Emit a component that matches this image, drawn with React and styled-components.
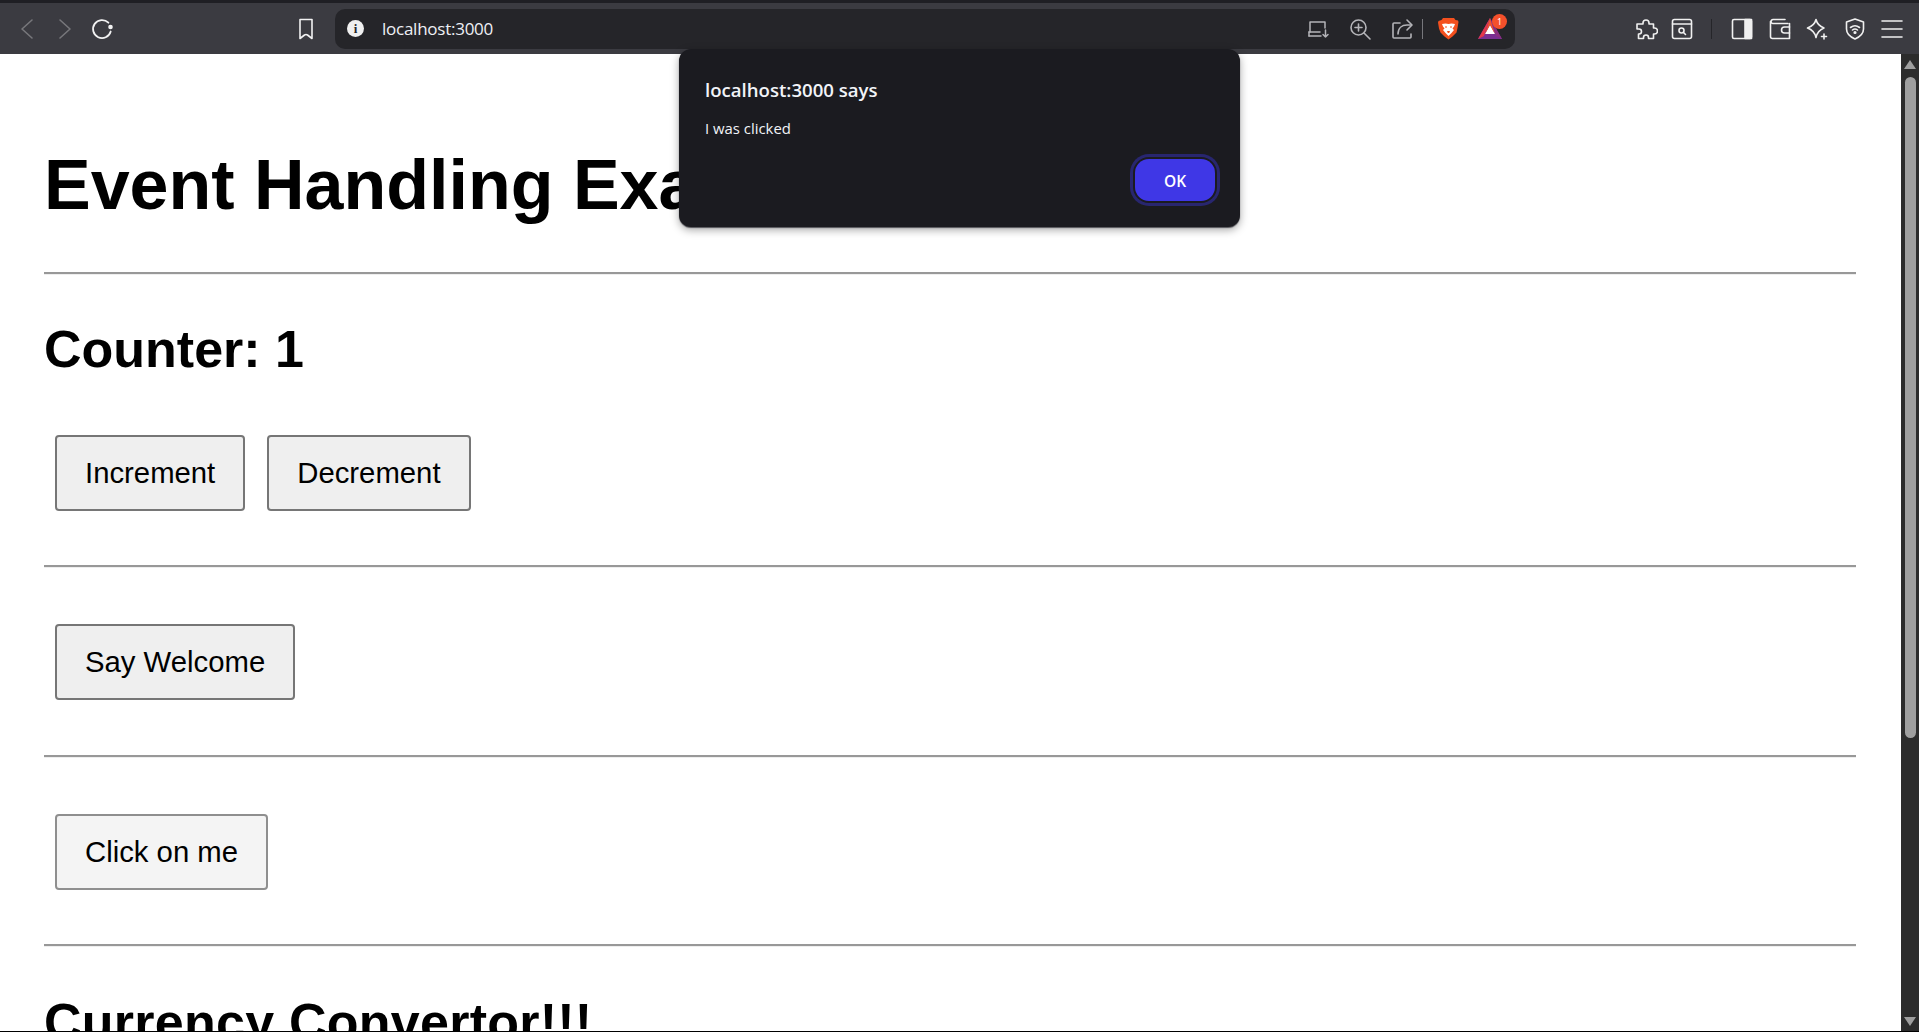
import React from "react";
import styled, { createGlobalStyle } from "styled-components";

const Global = createGlobalStyle`
	html, body {
		margin: 0;
		padding: 0;
		height: 100%;
		overflow: hidden;
		background: #ffffff;
	}
`;

const Window = styled.div`
	height: 1032px;
	display: flex;
	flex-direction: column;
	overflow: hidden;
	position: relative;
	font-family: "Liberation Sans", Arial, sans-serif;
`;

const TopStrip = styled.div`
	height: 3px;
	background: #1f1f24;
	flex: none;
`;

const Toolbar = styled.div`
	height: 51px;
	flex: none;
	background: #3b3b41;
	display: flex;
	align-items: center;
	color: #fff;
	padding-left: 15px;
`;

const NavButton = styled.div`
	width: 24px;
	height: 24px;
	margin-right: ${(p) => p.$gap || 0}px;
	color: ${(p) => p.$color || "#f2f2f2"};
	display: flex;
	flex: none;
	align-items: center;
	justify-content: center;
`;

const AddressBar = styled.div`
	width: 1180px;
	height: 40px;
	margin-left: 17px;
	border-radius: 10px;
	background: #252529;
	display: flex;
	align-items: center;
	padding: 0 13px 0 12px;
	box-sizing: border-box;
	flex: none;
`;

const InfoDot = styled.div`
	width: 17px;
	height: 17px;
	border-radius: 50%;
	background: #f0f0f0;
	color: #252529;
	font-family: "Liberation Serif", serif;
	font-size: 13px;
	font-weight: 700;
	line-height: 17px;
	text-align: center;
`;

const Url = styled.div`
	margin-left: 18px;
	flex: 1;
	font-family: "Open Sans", sans-serif;
	font-size: 17px;
	letter-spacing: -0.25px;
	color: #eef0f5;
`;

const AddressIcons = styled.div`
	display: flex;
	align-items: center;
	color: #b4b4b8;
`;

const Separator = styled.div`
	width: 1px;
	height: 20px;
	background: ${(p) => p.$color || "#77777c"};
	margin: ${(p) => p.$margin};
`;

const Tools = styled.div`
	display: flex;
	align-items: center;
	margin-left: 119px;
	color: #f0f0f0;
`;

const Slot = styled.div`
	position: relative;
	width: 24px;
	height: 24px;
	display: flex;
	align-items: center;
	justify-content: center;
	margin-left: ${(p) => p.$left || 0}px;
`;

const Badge = styled.div`
	position: absolute;
	top: -3px;
	right: -5px;
	width: 15px;
	height: 15px;
	border-radius: 50%;
	background: #f4502b;
	color: #fff;
	font-family: "Noto Sans", sans-serif;
	font-size: 9px;
	line-height: 15px;
	text-align: center;
`;

const Body = styled.div`
	flex: 1;
	min-height: 0;
	display: flex;
`;

const Page = styled.div`
	flex: 1;
	min-width: 0;
	overflow: hidden;
	padding: 12px 45px 0 44px;
	color: #000;
`;

const Title = styled.h1`
	font-size: 70px;
	font-weight: 700;
	line-height: 81px;
	margin: 79px 0 46px;
	white-space: nowrap;
`;

const Rule = styled.hr`
	height: 0;
	border: none;
	border-top: 2px solid #989898;
	border-bottom: 1px solid #eeeeee;
	margin: 0;
`;

const Counter = styled.h2`
	font-size: 52px;
	font-weight: 700;
	line-height: 60px;
	letter-spacing: ${(p) => p.$spacing || 0}px;
	margin: ${(p) => p.$top || 44}px 0 56px;
`;

const ButtonRow = styled.div`
	display: flex;
	gap: 22px;
	padding: ${(p) => p.$pad || "0"};
	margin-left: 11px;
`;

const PageButton = styled.button`
	height: 76px;
	padding: 0 28px;
	font-family: "Liberation Sans", Arial, sans-serif;
	font-size: 29.3px;
	color: #000;
	background: ${(p) => p.$bg || "#efefef"};
	border: 2px solid ${(p) => p.$border || "#767676"};
	border-radius: 4px;
	box-sizing: border-box;
`;

const Scrollbar = styled.div`
	width: 18px;
	flex: none;
	background: #2c2c2c;
	position: relative;
`;

const Thumb = styled.div`
	position: absolute;
	left: 4px;
	top: 23px;
	width: 11px;
	height: 661px;
	border-radius: 5.5px;
	background: #9f9f9f;
`;

const Arrow = styled.div`
	position: absolute;
	left: 3px;
	${(p) => (p.$down ? "bottom: 6px;" : "top: 6px;")}
	width: 0;
	height: 0;
	border-left: 6px solid transparent;
	border-right: 6px solid transparent;
	${(p) => (p.$down ? "border-top" : "border-bottom")}: 9px solid #9f9f9f;
`;

const BottomLine = styled.div`
	position: absolute;
	left: 0;
	right: 0;
	bottom: 0;
	height: 1px;
	background: #000;
`;

const Dialog = styled.div`
	position: absolute;
	left: 679px;
	top: 49px;
	width: 561px;
	height: 178px;
	box-sizing: border-box;
	padding: 28px 25px 0 26px;
	border-radius: 12px;
	background: #1b1b20;
	box-shadow: 0 1px 1px #55555a, 0 3px 8px rgba(0, 0, 0, 0.35);
	color: #f2f4f8;
	font-family: "Open Sans", "Noto Sans", sans-serif;
	display: flex;
	flex-direction: column;
`;

const DialogTitle = styled.div`
	font-size: 18.6px;
	font-weight: 600;
	line-height: 26px;
`;

const DialogText = styled.div`
	font-size: 14.9px;
	line-height: 20px;
	margin-top: 15px;
`;

const DialogActions = styled.div`
	display: flex;
	justify-content: flex-end;
	margin-top: 21px;
`;

const OkButton = styled.div`
	width: 80px;
	height: 42px;
	box-sizing: border-box;
	padding-top: 2px;
	border-radius: 14px;
	background: #3f37e6;
	box-shadow: 0 0 0 2px #1b1b20, 0 0 0 5px #28266f;
	display: flex;
	align-items: center;
	justify-content: center;
	font-size: 15.5px;
	font-weight: 600;
	color: #fff;
`;

const Icon = ({ children, size = 24, width = 1.6 }) => (
	<svg width={size} height={size} viewBox="0 0 24 24" fill="none" stroke="currentColor" strokeWidth={width} strokeLinecap="round" strokeLinejoin="round">
		{children}
	</svg>
);

export default function App() {
	return (
		<Window>
			<Global />
			<TopStrip />
			<Toolbar>
				<NavButton $gap={14} $color="#77777b">
					<Icon><path d="M17 3 7 12l10 9" /></Icon>
				</NavButton>
				<NavButton $gap={14} $color="#77777b">
					<Icon><path d="m7 3 10 9-10 9" /></Icon>
				</NavButton>
				<NavButton $gap={179}>
					<Icon width={1.8}>
						<path d="M17.400 5.700A9 9 0 1 0 19.700 14.500" />
						<circle cx="19.500" cy="10" r="1.400" fill="currentColor" />
					</Icon>
				</NavButton>
				<NavButton>
					<Icon><path d="M6 2.500h12v19l-4.500-3.500q-1.500-1-3 0L6 21.500z" /></Icon>
				</NavButton>
				<AddressBar>
					<InfoDot>i</InfoDot>
					<Url>localhost:3000</Url>
					<AddressIcons>
						<Slot>
							<Icon width={1.5}>
								<path d="M4 15V5h15v6" />
								<path d="M3 19h12M3 15h11" />
								<path d="M3 15v4" />
								<path d="M19.500 13v7m-2.500-2.500 2.500 2.500 2.500-2.500" />
							</Icon>
						</Slot>
						<Slot $left={18}>
							<Icon>
								<circle cx="10.500" cy="10.500" r="7.500" />
								<path d="m16 16 6 6M10.500 7v7M7 10.500h7" />
							</Icon>
						</Slot>
						<Slot $left={18}>
							<Icon>
								<path d="M10 6H4a1 1 0 0 0-1 1v13a1 1 0 0 0 1 1h16a1 1 0 0 0 1-1v-3" />
								<path d="M8 17c0-6 4-9 9-9h4" />
								<path d="m17 3 5 5-5 5" />
							</Icon>
						</Slot>
						<Separator $margin="0 8px 0 8px" />
						<Slot $left={5}>
							<svg width="21" height="22" viewBox="0 0 21 22">
								<path d="M5 0h11l1.500 2 2.500.500.500 1.500-.500 3-.500 3-1 4.500-4 4-4 3-4-3-4-4L1 10.500l-.500-3-.500-3 .500-1.500L3.500 2z" fill="#f4501e" />
								<path d="M4 6l3.500-.500 3 .500 3-.500L17 6l-1 2.500-1.500 2L16 12l-2.500 3-3 3-3-3L5 12l1.500-1.500L5 8.500z" fill="#fff" />
								<path d="M7 9h2M12 9h2M9.500 13.500h2l-1 1.500z" fill="#f4501e" stroke="#f4501e" strokeWidth="1" />
							</svg>
						</Slot>
						<Slot $left={18}>
							<svg width="24" height="22" viewBox="0 0 24 22">
								<path d="M12 0 0 21h24z" fill="#7a2f92" />
								<path d="M12 0 0 21l6-3z" fill="#e5364a" />
								<path d="M12 0l12 21-6-3z" fill="#8a2f80" />
								<path d="M12 7 7 16h10z" fill="#fff" />
								<path d="M12 0 7 16l5-9 5 9z" fill="#f2532c" />
							</svg>
							<Badge>1</Badge>
						</Slot>
					</AddressIcons>
				</AddressBar>
				<Tools>
					<Slot>
						<Icon>
							<path d="M9 6a3 3 0 0 1 6 0v1h4.500v4H20.500a3 3 0 0 1 0 6h-1v4.500h-5v-1a2.500 2.500 0 0 0-5 0v1H4.500V17H5a2.500 2.500 0 0 0 0-5H3V7h6z" />
						</Icon>
					</Slot>
					<Slot $left={12}>
						<Icon>
							<rect x="2.500" y="2.500" width="19" height="19" rx="2" />
							<path d="M2.500 7h19" />
							<circle cx="11.500" cy="13.500" r="2.500" />
							<path d="m13.500 15.500 2 2" />
						</Icon>
					</Slot>
					<Separator $color="#252529" $margin="0 18px 0 17px" />
					<Slot>
						<Icon>
							<rect x="2.500" y="2.500" width="19" height="19" rx="1.500" />
							<rect x="15" y="2.500" width="6.500" height="19" fill="currentColor" />
						</Icon>
					</Slot>
					<Slot $left={14}>
						<Icon>
							<path d="M20 6.500H5a2 2 0 0 1-2-2 2 2 0 0 1 2-2h12" />
							<path d="M2.500 4.500V19.500a2 2 0 0 0 2 2h17v-15" />
							<path d="M21.500 10h-5a2.500 2.500 0 0 0 0 6h5" />
						</Icon>
					</Slot>
					<Slot $left={13}>
						<Icon>
							<path d="M11 2.500q1.500 6 8 8.500-6.500 2.500-8 9.500-1.500-7-8.500-9.500 7-2.500 8.500-8.500z" />
							<path d="M19 17v5M16.500 19.500h5" />
						</Icon>
					</Slot>
					<Slot $left={14}>
						<Icon>
							<path d="M12 2 3.500 5v7c0 5 4 8 8.500 10 4.500-2 8.500-5 8.500-10V5z" />
							<path d="M7.500 10.500q4.500-3.500 9 0M9.500 13q2.500-2 5 0" />
							<circle cx="12" cy="15.500" r="0.800" fill="currentColor" />
						</Icon>
					</Slot>
					<Slot $left={13}>
						<Icon><path d="M2 4h20M2 12h20M2 20h20" /></Icon>
					</Slot>
				</Tools>
			</Toolbar>
			<Body>
				<Page>
					<Title>Event Handling Example</Title>
					<Rule />
					<Counter>Counter: 1</Counter>
					<ButtonRow $pad="0 0 54px">
						<PageButton>Increment</PageButton>
						<PageButton>Decrement</PageButton>
					</ButtonRow>
					<Rule />
					<ButtonRow $pad="56px 0 55px">
						<PageButton>Say Welcome</PageButton>
					</ButtonRow>
					<Rule />
					<ButtonRow $pad="56px 0 54px">
						<PageButton $bg="#f4f4f4" $border="#8f8f8f">Click on me</PageButton>
					</ButtonRow>
					<Rule />
					<Counter $top={45} $spacing={0.25}>Currency Convertor!!!</Counter>
				</Page>
				<Scrollbar>
					<Arrow />
					<Thumb />
					<Arrow $down />
				</Scrollbar>
			</Body>
			<BottomLine />
			<Dialog>
				<DialogTitle>localhost:3000 says</DialogTitle>
				<DialogText>I was clicked</DialogText>
				<DialogActions>
					<OkButton>OK</OkButton>
				</DialogActions>
			</Dialog>
		</Window>
	);
}
